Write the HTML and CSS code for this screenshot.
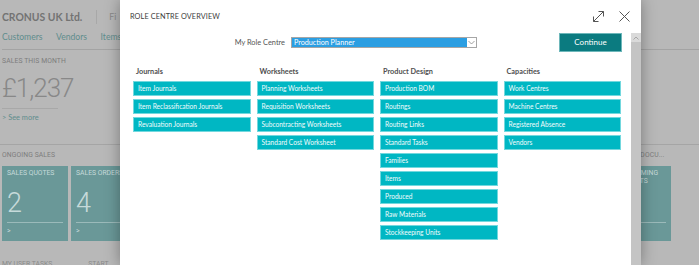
FILE: index.html
```html
<!doctype html>
<html lang="en">
<head>
    <meta charset="UTF-8">
    <title>Role Centre Overview</title>
    <link rel="stylesheet" href="styles.css">
</head>
<body>
<div id="page">
    <div class="topbar">
        <span class="company">CRONUS UK Ltd.</span>
        <span class="divider"></span>
        <span class="topmenu">Fi</span>
    </div>
    <div class="navbar">
        <span>Customers</span>
        <span>Vendors</span>
        <span>Items</span>
    </div>
    <div class="kpi">
        <div class="cap">SALES THIS MONTH</div>
        <div class="big">£1,237</div>
        <div class="kpi-rule"></div>
        <div class="see-more">&gt; See more</div>
    </div>
    <div class="cues">
        <div class="cue-group">
            <div class="cap">ONGOING SALES</div>
            <div class="tiles">
                <div class="tile">
                    <div class="tile-title">SALES QUOTES</div>
                    <div class="tile-num">2</div>
                    <div class="tile-rule"></div>
                    <div class="tile-foot">&gt;</div>
                </div>
                <div class="tile">
                    <div class="tile-title">SALES ORDERS</div>
                    <div class="tile-num">4</div>
                    <div class="tile-rule"></div>
                    <div class="tile-foot">&gt;</div>
                </div>
            </div>
        </div>
        <div class="cue-group docs">
            <div class="cap">SALES DOCU...</div>
            <div class="tiles">
                <div class="tile wide">
                    <div class="tile-title">UPCOMING<br>EVENTS</div>
                    <div class="tile-num"></div>
                    <div class="tile-rule"></div>
                    <div class="tile-foot"></div>
                </div>
            </div>
        </div>
    </div>
    <div class="bottom-row">
        <span>MY USER TASKS</span>
        <span>START</span>
    </div>
</div>

<div id="dialog">
    <div class="dialog-head">
        <span class="dialog-title">ROLE CENTRE OVERVIEW</span>
        <span class="head-icon">
            <svg width="13" height="13" viewBox="0 0 13 13"><path d="M1.5 11.5 L11.5 1.5 M6.5 1.5 H11.5 V6.5 M1.5 6.5 V11.5 H6.5" fill="none" stroke="#555" stroke-width="1"/></svg>
        </span>
        <span class="head-icon">
            <svg width="11" height="11" viewBox="0 0 11 11"><path d="M0.5 0.5 L10.5 10.5 M10.5 0.5 L0.5 10.5" fill="none" stroke="#555" stroke-width="1"/></svg>
        </span>
    </div>
    <div class="dialog-body">
        <div class="dialog-content">
            <div class="role-row">
                <span class="role-label">My Role Centre</span>
                <div class="role-select">
                    <span class="value">Production Planner</span>
                    <span class="arrow">
                        <svg width="7" height="5" viewBox="0 0 7 5"><path d="M0.5 1 L3.5 4 L6.5 1" fill="none" stroke="#888" stroke-width="0.8"/></svg>
                    </span>
                </div>
                <div class="btn-continue">Continue</div>
            </div>
            <div class="columns">
                <div class="col">
                    <div class="col-head">Journals</div>
                    <div class="link">Item Journals</div>
                    <div class="link">Item Reclassification Journals</div>
                    <div class="link">Revaluation Journals</div>
                </div>
                <div class="col">
                    <div class="col-head">Worksheets</div>
                    <div class="link">Planning Worksheets</div>
                    <div class="link">Requisition Worksheets</div>
                    <div class="link">Subcontracting Worksheets</div>
                    <div class="link">Standard Cost Worksheet</div>
                </div>
                <div class="col">
                    <div class="col-head">Product Design</div>
                    <div class="link">Production BOM</div>
                    <div class="link">Routings</div>
                    <div class="link">Routing Links</div>
                    <div class="link">Standard Tasks</div>
                    <div class="link">Families</div>
                    <div class="link">Items</div>
                    <div class="link">Produced</div>
                    <div class="link">Raw Materials</div>
                    <div class="link">Stockkeeping Units</div>
                </div>
                <div class="col">
                    <div class="col-head">Capacities</div>
                    <div class="link">Work Centres</div>
                    <div class="link">Machine Centres</div>
                    <div class="link">Registered Absence</div>
                    <div class="link">Vendors</div>
                </div>
            </div>
        </div>
        <div class="scrollbar">
            <div class="scroll-up">
                <svg width="6" height="4" viewBox="0 0 6 4"><path d="M0.5 3.5 L3 1 L5.5 3.5" fill="none" stroke="#999" stroke-width="0.8"/></svg>
            </div>
        </div>
    </div>
</div>
</body>
</html>
```

FILE: styles.css
```css
*{
    padding: 0;
    margin: 0;
    box-sizing: border-box;
}
body{
    width: 699px;
    height: 265px;
    overflow: hidden;
    position: relative;
    background: #b8b8b8;
    font-family: Roboto, "Liberation Sans", sans-serif;
    color: #777777;
}

/* page behind the dialog */
#page{
    padding-left: 2px;
}
.topbar{
    display: flex;
    align-items: center;
    height: 32px;
    padding-top: 2px;
}
.company{
    font-family: Lato, "Liberation Sans", sans-serif;
    font-weight: 700;
    font-size: 10.4px;
    color: #737373;
}
.divider{
    width: 1px;
    height: 14px;
    background: #a8a8a8;
    margin: 0 12px 0 14px;
}
.topmenu{
    font-family: Lato, "Liberation Sans", sans-serif;
    font-size: 8.6px;
    color: #888888;
}
.navbar{
    display: flex;
    gap: 13.5px;
    height: 18px;
    border-bottom: 1px solid #a3a3a3;
    font-family: Lato, "Liberation Sans", sans-serif;
    font-size: 8.6px;
    line-height: 10px;
    color: #5f8d8d;
}
.cap{
    font-size: 6.8px;
    line-height: 10px;
    color: #7d7d7d;
    letter-spacing: 0.1px;
    white-space: nowrap;
}
.kpi .cap{
    margin-top: 6px;
}
.big{
    margin-top: 7px;
    font-size: 26px;
    font-weight: 300;
    line-height: 30px;
    letter-spacing: -1px;
    color: #888888;
}
.kpi-rule{
    width: 56px;
    height: 1px;
    background: #a8a8a8;
    margin-top: 5px;
}
.see-more{
    margin-top: 4px;
    font-family: Lato, "Liberation Sans", sans-serif;
    font-size: 7.4px;
    line-height: 10px;
    color: #5f8d8d;
}
.cues{
    display: flex;
    margin-top: 21px;
    margin-left: -2px;
    padding-left: 2px;
    padding-right: 28px;
    border-top: 1px solid #a5a5a5;
}
.cue-group .cap{
    margin-top: 5px;
}
.tiles{
    display: flex;
    gap: 3px;
    margin-top: 6px;
}
.tile{
    width: 66px;
    height: 75px;
    background: #6a9898;
    padding: 3px 5px 0 5px;
    color: #c6dada;
}
.tile-title{
    font-size: 6.8px;
    line-height: 8px;
    height: 10px;
    white-space: nowrap;
}
.tile-num{
    margin-top: 9px;
    height: 30px;
    font-size: 27px;
    font-weight: 300;
    line-height: 30px;
}
.tile-rule{
    margin-top: 4px;
    height: 1px;
    background: #9bbaba;
}
.tile-foot{
    margin-top: 3px;
    font-size: 7px;
    line-height: 10px;
}
.docs{
    margin-left: auto;
    width: 53px;
}
.tile.wide{
    width: 53px;
}
.bottom-row{
    display: flex;
    gap: 36px;
    margin-top: 18px;
    font-size: 6.8px;
    line-height: 10px;
    color: #8a8a8a;
}

/* dialog */
#dialog{
    position: absolute;
    top: 0;
    left: 120px;
    width: 521px;
    height: 265px;
    background: #ffffff;
    box-shadow: 0 0 14px rgba(0, 0, 0, 0.35);
    font-family: Lato, "Liberation Sans", sans-serif;
    color: #444444;
}
.dialog-head{
    display: flex;
    align-items: center;
    height: 33px;
    padding: 0 11px 0 10px;
    gap: 14px;
}
.dialog-title{
    flex: 1;
    font-size: 7.3px;
    letter-spacing: 0.1px;
    color: #3c3c3c;
}
.head-icon{
    display: flex;
}
.dialog-body{
    display: flex;
    height: 232px;
}
.dialog-content{
    flex: 1;
}
.role-row{
    display: flex;
    align-items: center;
    height: 19px;
    padding-right: 9px;
}
.role-label{
    width: 171px;
    padding-right: 6px;
    text-align: right;
    font-size: 7.4px;
    color: #555555;
}
.role-select{
    display: flex;
    width: 186px;
    height: 11px;
    border: 1px solid #a6a6a6;
}
.role-select .value{
    flex: 1;
    background: #2b9ee2;
    color: #ffffff;
    font-size: 7.2px;
    line-height: 9px;
    padding-left: 2px;
}
.role-select .arrow{
    width: 9px;
    display: flex;
    align-items: center;
    justify-content: center;
    background: #ffffff;
}
.btn-continue{
    margin-left: auto;
    width: 63px;
    height: 19px;
    background: #0b7b80;
    border: 1px solid #6db7ba;
    color: #ffffff;
    font-size: 8px;
    line-height: 17px;
    text-align: center;
}
.columns{
    display: grid;
    grid-template-columns: repeat(4, 117.5px);
    column-gap: 6px;
    padding-left: 13px;
    margin-top: 15px;
}
.col-head{
    padding-left: 3px;
    font-size: 7.3px;
    font-weight: 700;
    line-height: 10px;
    color: #505050;
    margin-bottom: 4px;
}
.link{
    height: 15px;
    margin-bottom: 3px;
    background: #00b7c3;
    border: 1px solid #73d8de;
    color: #f2fcfd;
    font-size: 6.6px;
    line-height: 13px;
    padding-left: 4px;
}
.scrollbar{
    width: 10px;
    background: #c4c4c4;
}
.scroll-up{
    height: 9px;
    background: #dadada;
    display: flex;
    align-items: center;
    justify-content: center;
}
```
